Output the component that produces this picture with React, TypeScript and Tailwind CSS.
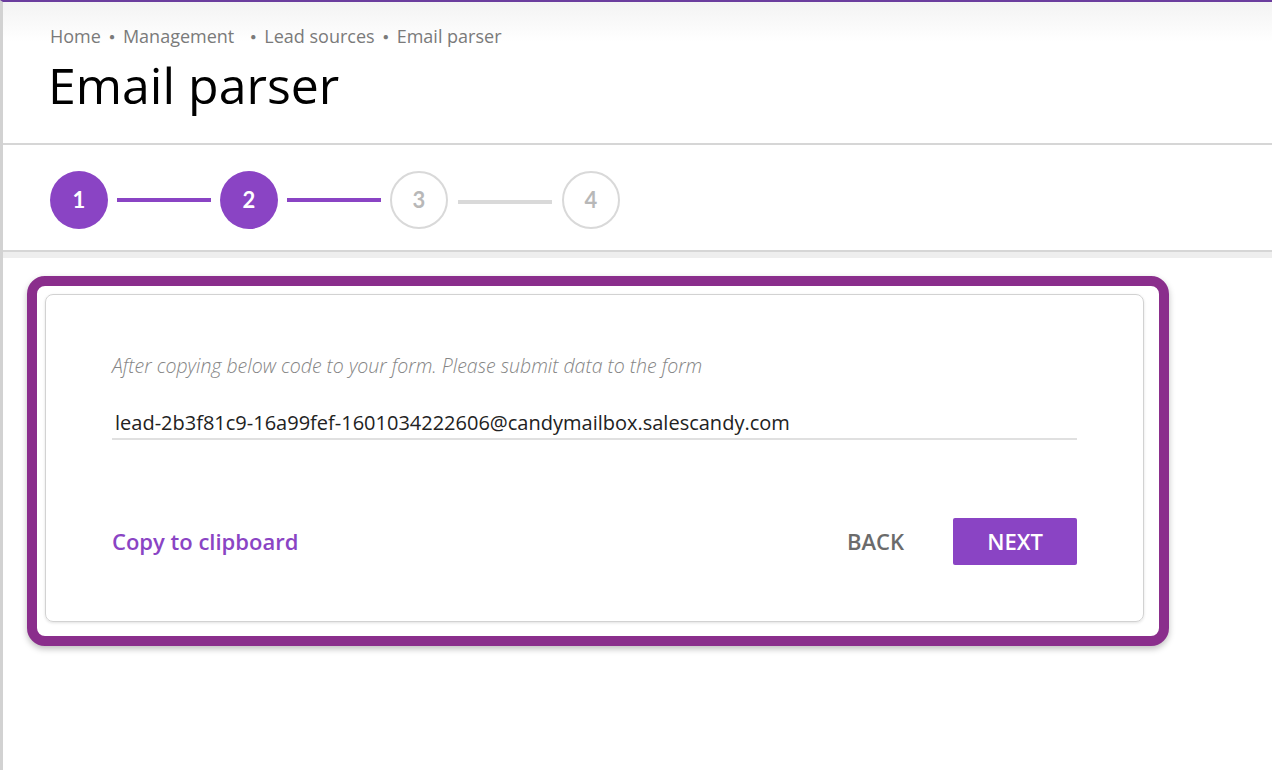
import React from "react";

const font = { fontFamily: '"Open Sans", "Noto Sans", Arial, sans-serif' };

function Step({ n, active }: { n: number; active: boolean }) {
  return (
    <div
      className={
        active
          ? "w-[58px] h-[58px] rounded-full bg-[#8a44c4] flex items-center justify-center text-white text-[22px] font-bold"
          : "w-[58px] h-[58px] rounded-full border-2 border-[#d9d9d9] bg-white flex items-center justify-center text-[#b8b8b8] text-[22px] font-bold"
      }
      style={{ fontFamily: 'Lato, "Open Sans", sans-serif' }}
    >
      {n}
    </div>
  );
}

function Line({ active }: { active: boolean }) {
  return (
    <div
      className={
        active
          ? "w-[94px] h-[4px] mx-[9px] bg-[#8a44c4]"
          : "w-[94px] h-[4px] mx-[10px] mt-[4px] bg-[#d9d9d9]"
      }
    />
  );
}

export default function App() {
  return (
    <div
      className="w-[1272px] h-[770px] bg-white border-t-2 border-t-[#6b3d9e] border-l-[3px] border-l-[#d2d2d2] overflow-hidden"
      style={font}
    >
      {/* Header */}
      <div className="bg-gradient-to-b from-[#f3f3f3] to-white to-[40px] pl-[47px] pt-[22px] h-[141px]">
        <div className="flex items-center text-[18px] leading-[24px] text-[#7a7a7a]">
          <span>Home</span>
          <span className="mx-[8px] text-[10px]">●</span>
          <span>Management</span>
          <span className="ml-[16px] mr-[8px] text-[10px]">●</span>
          <span>Lead sources</span>
          <span className="mx-[8px] text-[10px]">●</span>
          <span>Email parser</span>
        </div>
        <div className="text-[50px] leading-[58px] text-black mt-[8px] -ml-[2px]">
          Email parser
        </div>
      </div>
      <div className="h-[2px] bg-[#d6d6d6]" />

      {/* Stepper */}
      <div className="h-[105px] flex items-center pl-[47px] pt-[4px]">
        <Step n={1} active />
        <Line active />
        <Step n={2} active />
        <Line active />
        <Step n={3} active={false} />
        <Line active={false} />
        <Step n={4} active={false} />
      </div>
      <div className="h-[2px] bg-[#d6d6d6]" />
      <div className="h-[6px] bg-[#eeeeee]" />

      {/* Highlight */}
      <div className="ml-[24px] mt-[18px] w-[1142px] h-[370px] border-[10px] border-[#8a2e8c] rounded-[18px] pt-[8px] pl-[8px] pr-[15px] pb-[14px] bg-white shadow-[0_3px_6px_rgba(0,0,0,0.25)]">
        <div className="h-full border border-[#d2d2d2] rounded-[8px] shadow-[0_1px_3px_rgba(0,0,0,0.12)] px-[66px] pt-[58px]">
          <div className="text-[19.5px] leading-[26px] italic font-light text-[#858585]">
            After copying below code to your form. Please submit data to the form
          </div>
          <div className="mt-[29px] border-b-2 border-[#e0e0e0] pl-[3px] text-[20px] leading-[30px] text-[#222]">
            lead-2b3f81c9-16a99fef-1601034222606@candymailbox.salescandy.com
          </div>
          <div className="mt-[78px] flex items-center">
            <span className="text-[22px] font-semibold text-[#8a44c4]">Copy to clipboard</span>
            <div className="flex-1" />
            <span className="text-[22px] font-semibold text-[#6b6b6b] mr-[49px]">BACK</span>
            <button className="w-[124px] h-[47px] bg-[#8a44c4] rounded-[2px] text-white text-[22px] font-semibold">
              NEXT
            </button>
          </div>
        </div>
      </div>
    </div>
  );
}
